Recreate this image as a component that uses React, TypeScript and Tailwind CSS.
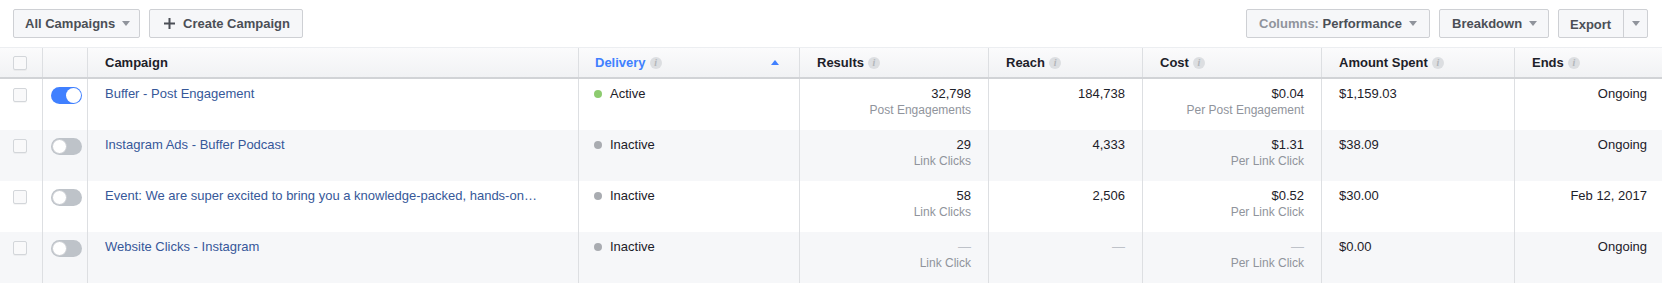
import { Fragment } from 'react';

const GRID = 'grid grid-cols-[43px_45px_491px_221px_189px_154px_179px_193px_147px]';

interface Row {
  name: string;
  on: boolean;
  active: boolean;
  results: string;
  resultsSub: string;
  reach: string;
  cost: string;
  costSub: string;
  spent: string;
  ends: string;
}

const rows: Row[] = [
  {
    name: 'Buffer - Post Engagement',
    on: true,
    active: true,
    results: '32,798',
    resultsSub: 'Post Engagements',
    reach: '184,738',
    cost: '$0.04',
    costSub: 'Per Post Engagement',
    spent: '$1,159.03',
    ends: 'Ongoing',
  },
  {
    name: 'Instagram Ads - Buffer Podcast',
    on: false,
    active: false,
    results: '29',
    resultsSub: 'Link Clicks',
    reach: '4,333',
    cost: '$1.31',
    costSub: 'Per Link Click',
    spent: '$38.09',
    ends: 'Ongoing',
  },
  {
    name: 'Event: We are super excited to bring you a knowledge-packed, hands-on…',
    on: false,
    active: false,
    results: '58',
    resultsSub: 'Link Clicks',
    reach: '2,506',
    cost: '$0.52',
    costSub: 'Per Link Click',
    spent: '$30.00',
    ends: 'Feb 12, 2017',
  },
  {
    name: 'Website Clicks - Instagram',
    on: false,
    active: false,
    results: '—',
    resultsSub: 'Link Click',
    reach: '—',
    cost: '—',
    costSub: 'Per Link Click',
    spent: '$0.00',
    ends: 'Ongoing',
  },
];

function Caret({ color = 'border-t-[#90949c]' }: { color?: string }) {
  return <span className={`inline-block h-0 w-0 border-x-[4px] border-t-[5px] border-x-transparent ${color}`} />;
}

function Info() {
  return (
    <span className="flex h-[12px] w-[12px] items-center justify-center rounded-full bg-[#dcdee1] font-['Liberation_Serif',serif] text-[10px] font-bold italic leading-none text-[#b3b6ba]">
      i
    </span>
  );
}

function Checkbox() {
  return <span className="block h-[14px] w-[14px] rounded-[2px] border border-[#d3d6da] bg-[#f9f9fa] shadow-[0_1px_0_rgba(0,0,0,0.04)]" />;
}

function Toggle({ on }: { on: boolean }) {
  return (
    <span
      className={`flex h-[17px] w-[31px] rounded-full p-[1px] ${on ? 'justify-end bg-[#4080ff]' : 'justify-start bg-[#bec3c9]'}`}
    >
      <span className={`block h-[15px] w-[15px] rounded-full bg-white ${on ? '' : 'border border-[#c9ccd1]'}`} />
    </span>
  );
}

const btn =
  'flex h-[29px] items-center rounded-[2px] border border-[#ced0d4] bg-[#f6f7f9] text-[13px] font-bold text-[#4b4f56]';

export default function App() {
  const cell = 'border-r border-[#dddfe2]';
  return (
    <div className="h-[283px] w-[1662px] overflow-hidden bg-white font-['Liberation_Sans',Arial,sans-serif] text-[13px] text-[#1d2129]">
      {/* toolbar */}
      <div className="flex h-[47px] items-start justify-between pl-[13px] pr-[14px] pt-[9px]">
        <div className="flex gap-[9px]">
          <button className={`${btn} w-[127px] gap-[7px] pl-[11px]`}>
            All Campaigns <Caret />
          </button>
          <button className={`${btn} w-[154px] gap-[8px] pl-[14px]`}>
            <svg width="11" height="11" viewBox="0 0 11 11">
              <rect x="4.5" y="0" width="2" height="11" fill="#4b4f56" />
              <rect x="0" y="4.5" width="11" height="2" fill="#4b4f56" />
            </svg>
            Create Campaign
          </button>
        </div>
        <div className="flex gap-[9px]">
          <button className={`${btn} w-[184px] gap-[7px] pl-[12px]`}>
            <span>
              <span className="text-[#90949c]">Columns: </span>Performance
            </span>
            <Caret />
          </button>
          <button className={`${btn} w-[110px] gap-[7px] pl-[12px]`}>
            Breakdown <Caret />
          </button>
          <div className={`${btn} w-[90px]`}>
            <span className="flex h-full w-[65px] items-center border-r border-[#ced0d4] pl-[11px] pt-[2px]">Export</span>
            <span className="flex flex-1 items-center justify-center">
              <Caret />
            </span>
          </div>
        </div>
      </div>

      {/* header */}
      <div
        className={`${GRID} h-[32px] border-b-2 border-t border-b-[#d1d3d6] border-t-[#eceef1] bg-gradient-to-b from-[#fbfbfc] to-[#f1f2f4] font-bold`}
      >
        <div className={`${cell} flex items-center pl-[13px]`}>
          <Checkbox />
        </div>
        <div className={cell} />
        <div className={`${cell} flex items-center px-[17px]`}>Campaign</div>
        <div className={`${cell} flex items-center justify-between pl-[16px] pr-[20px]`}>
          <span className="flex items-center gap-[4px] text-[#4080ff]">
            Delivery <Info />
          </span>
          <Caret color="rotate-180 border-t-[#4080ff] border-x-[4px] border-t-[4px]" />
        </div>
        {['Results', 'Reach', 'Cost', 'Amount Spent', 'Ends'].map((h, i) => (
          <div key={h} className={`${i < 4 ? cell : ''} flex items-center gap-[4px] px-[17px]`}>
            {h} <Info />
          </div>
        ))}
      </div>

      {/* rows */}
      {rows.map((r, idx) => (
        <div key={r.name} className={`${GRID} h-[51px] leading-[16px] ${idx % 2 === 1 ? 'bg-[#f6f7f9]' : 'bg-white'}`}>
          <div className={`${cell} pl-[13px] pt-[9px]`}>
            <Checkbox />
          </div>
          <div className={`${cell} pl-[8px] pt-[8px]`}>
            <Toggle on={r.on} />
          </div>
          <div className={`${cell} overflow-hidden whitespace-nowrap px-[17px] pt-[7px] text-[#365899]`}>{r.name}</div>
          <div className={`${cell} pl-[15px] pt-[7px]`}>
            <span className="flex items-center gap-[8px]">
              <span className={`block h-[8px] w-[8px] rounded-full ${r.active ? 'bg-[#8dcb6f]' : 'bg-[#a9acb1]'}`} />
              {r.active ? 'Active' : 'Inactive'}
            </span>
          </div>
          <div className={`${cell} px-[17px] pt-[7px] text-right`}>
            <div className={r.results === '—' ? 'text-[#bec2c9]' : ''}>{r.results}</div>
            <div className="text-[12px] text-[#90949c]">{r.resultsSub}</div>
          </div>
          <div className={`${cell} px-[17px] pt-[7px] text-right ${r.reach === '—' ? 'text-[#bec2c9]' : ''}`}>{r.reach}</div>
          <div className={`${cell} px-[17px] pt-[7px] text-right`}>
            <div className={r.cost === '—' ? 'text-[#bec2c9]' : ''}>{r.cost}</div>
            <div className="text-[12px] text-[#90949c]">{r.costSub}</div>
          </div>
          <div className={`${cell} px-[17px] pt-[7px]`}>{r.spent}</div>
          <div className="px-[15px] pt-[7px] text-right">
            <Fragment>{r.ends}</Fragment>
          </div>
        </div>
      ))}
    </div>
  );
}
